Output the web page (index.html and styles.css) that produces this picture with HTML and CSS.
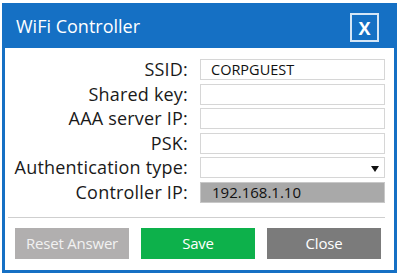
FILE: index.html
```html
<!DOCTYPE html>
<html>
<head>
<meta charset="utf-8">
<link rel="stylesheet" href="styles.css">
</head>
<body>
<div class="dialog">
  <div class="titlebar">
    <span class="title">WiFi Controller</span>
    <span class="close-x">X</span>
  </div>
  <div class="content">
    <div class="form">
      <label class="lbl">SSID:</label>
      <div class="field"><span class="val">CORPGUEST</span></div>
      <label class="lbl">Shared key:</label>
      <div class="field"></div>
      <label class="lbl">AAA server IP:</label>
      <div class="field"></div>
      <label class="lbl">PSK:</label>
      <div class="field"></div>
      <label class="lbl">Authentication type:</label>
      <div class="field select"><span class="arrow"></span></div>
      <label class="lbl">Controller IP:</label>
      <div class="field disabled"><span class="val">192.168.1.10</span></div>
    </div>
    <div class="sep"></div>
    <div class="buttons">
      <div class="btn reset">Reset Answer</div>
      <div class="btn save">Save</div>
      <div class="btn close">Close</div>
    </div>
  </div>
</div>
</body>
</html>
```

FILE: styles.css
```css
html, body {
  margin: 0;
  padding: 0;
  background: #ffffff;
}
body {
  font-family: "Open Sans", "DejaVu Sans", sans-serif;
  width: 404px;
  height: 278px;
  overflow: hidden;
}
.dialog {
  margin: 3px 0 0 2px;
  width: 395px;
  height: 270px;
  box-sizing: border-box;
  border: 3px solid #1570c4;
  display: flex;
  flex-direction: column;
  background: #ffffff;
}
.titlebar {
  height: 42px;
  background: #1570c4;
  display: flex;
  align-items: center;
  justify-content: space-between;
  padding: 0 15px 0 11px;
  flex-shrink: 0;
}
.title {
  color: #ffffff;
  font-size: 18px;
  margin-top: -2px;
}
.close-x {
  width: 29px;
  height: 29px;
  box-sizing: border-box;
  border: 2px solid #d5e6f6;
  color: #ffffff;
  font-weight: bold;
  font-size: 18px;
  display: flex;
  align-items: center;
  justify-content: center;
  margin-top: 1px;
}
.content {
  flex: 1;
  display: flex;
  flex-direction: column;
  padding: 11px 9px 0 0;
}
.form {
  display: grid;
  grid-template-columns: 183px 185px;
  column-gap: 12px;
  grid-auto-rows: 21px;
  row-gap: 3.6px;
}
.lbl {
  text-align: right;
  font-size: 18px;
  color: #1a1a1a;
  line-height: 21px;
  white-space: nowrap;
  letter-spacing: 0.2px;
}
.field {
  border: 1px solid #d6d6d6;
  box-sizing: border-box;
  background: #ffffff;
  display: flex;
  align-items: center;
  padding-left: 10px;
  position: relative;
}
.field.disabled {
  background: #a9a9a9;
  border-color: #c8c8c8;
}
.val {
  font-size: 14.5px;
  color: #111111;
}
.disabled .val {
  font-size: 15px;
  padding-left: 1px;
}
.arrow {
  position: absolute;
  right: 5px;
  top: 8px;
  width: 0;
  height: 0;
  border-left: 4.5px solid transparent;
  border-right: 4.5px solid transparent;
  border-top: 6px solid #111111;
}
.sep {
  height: 1px;
  background: #cfcfcf;
  margin: 14px 0 0 3px;
}
.buttons {
  display: flex;
  justify-content: space-between;
  padding: 10px 4px 0 10px;
}
.btn {
  width: 114px;
  height: 31px;
  display: flex;
  align-items: center;
  justify-content: center;
  color: #ffffff;
  font-size: 15px;
  letter-spacing: -0.2px;
}
.reset {
  background: #b1afaf;
  color: #f2f2f2;
}
.save {
  background: #0db14b;
}
.close {
  background: #7b7b7b;
}
```
